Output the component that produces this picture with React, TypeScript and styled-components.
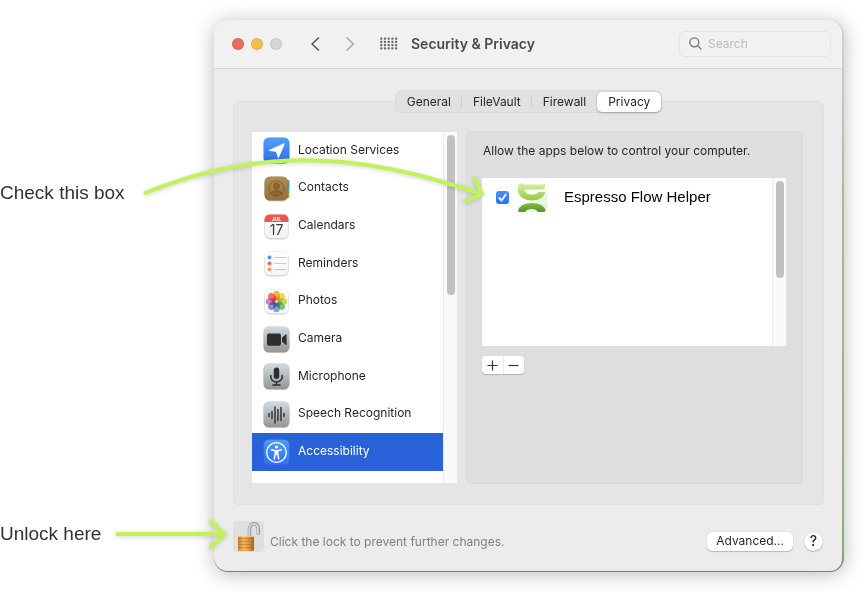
import React from "react";
import styled, { createGlobalStyle, css } from "styled-components";

const GlobalStyle = createGlobalStyle`
  *, *::before, *::after { box-sizing: border-box; }
  body {
    margin: 0;
    background: #fff;
    color: #262626;
    font-family: Inter, "Liberation Sans", sans-serif;
    font-size: 12px;
    line-height: 16px;
  }
  button, input { font: inherit; color: inherit; }
  button { border: 0; padding: 0; background: none; }
`;

const Page = styled.main`
  position: relative;
  display: grid;
  grid-template-columns: 214px minmax(0, 1fr);
  padding: 20px 20px 20px 0;
`;

const Notes = styled.aside`
  display: flex;
  flex-direction: column;
  justify-content: space-between;
  padding: 161px 0 26px;
  font-family: "Liberation Sans", sans-serif;
  font-size: 19px;
  line-height: 24px;
  color: #333;
`;

const Note = styled.p`
  margin: 0;
`;

const Arrows = styled.svg`
  position: absolute;
  left: 0;
  top: 0;
  pointer-events: none;
  filter: drop-shadow(0 1px 2px rgba(0, 0, 0, 0.18));
`;

const Backdrop = styled.div`
  padding: 0 2px 1px 0;
  border-radius: 14px;
  background: linear-gradient(#d5d6cc, #b2b79f 30%, #8fae7a 96%, #6f8461);
  box-shadow: 0 2px 20px rgba(0, 0, 0, 0.27);
`;

const Window = styled.section`
  border-radius: 14px 14px 12px 14px;
  background: #ececec;
  overflow: hidden;
`;

const TitleBar = styled.header`
  display: flex;
  align-items: center;
  height: 49px;
  padding: 0 11px 1px 18px;
  border-bottom: 1px solid #d5d5d5;
  background: #f1f1f1;
`;

const Lights = styled.div`
  display: flex;
  gap: 7px;
`;

const Light = styled.button<{ $color: string }>`
  width: 12px;
  height: 12px;
  border-radius: 50%;
  background: ${(p) => p.$color};
  box-shadow: inset 0 0 0 1px rgba(0, 0, 0, 0.08);
`;

const NavButtons = styled.div`
  display: flex;
  gap: 15px;
  margin: 0 19px 0 23px;
`;

const IconButton = styled.button`
  display: grid;
  place-items: center;
  width: 20px;
  height: 20px;
`;

const Title = styled.h1`
  flex: 1;
  margin: 0 0 0 12px;
  font-size: 14px;
  font-weight: 600;
  line-height: 20px;
  color: #4a4a4a;
`;

const SearchBox = styled.label`
  display: flex;
  align-items: center;
  gap: 6px;
  width: 152px;
  height: 26px;
  padding: 0 9px;
  border: 1px solid #e5e5e5;
  border-radius: 6px;
`;

const SearchInput = styled.input`
  min-width: 0;
  flex: 1;
  padding: 0;
  border: 0;
  outline: 0;
  background: none;
  &::placeholder { color: #bababa; opacity: 1; }
`;

const Body = styled.div`
  padding: 22px 18px 19px 19px;
`;

const Tabs = styled.div`
  position: relative;
  display: flex;
  align-items: center;
  width: fit-content;
  height: 21px;
  margin: 0 auto -11px;
  border-radius: 6px;
  background: #e1e1e1;
  box-shadow: 0 0 0 1px #dadada;
`;

const Tab = styled.button<{ $active?: boolean; $divided?: boolean }>`
  position: relative;
  height: 20px;
  padding: 0 11px;
  border-radius: 5px;
  ${(p) => p.$active && css`
    background: #fff;
    box-shadow: 0 0 1px rgba(0, 0, 0, 0.3), 0 1px 2px rgba(0, 0, 0, 0.25);
  `}
  ${(p) => p.$divided && css`
    &::after {
      content: "";
      position: absolute;
      right: 0;
      top: 4px;
      width: 1px;
      height: 12px;
      background: #cfcfcf;
    }
  `}
`;

const Panel = styled.div`
  display: flex;
  gap: 9px;
  padding: 29px 20px 20px 18px;
  border: 1px solid #dfdfdf;
  border-radius: 5px;
  background: #e5e5e5;
`;

const Scroller = styled.div<{ $width?: string; $height: string }>`
  display: flex;
  width: ${(p) => p.$width ?? "auto"};
  height: ${(p) => p.$height};
  background: #fff;
`;

const Track = styled.div`
  flex: none;
  width: 14px;
  padding: 3px;
  border-left: 1px solid #ebebeb;
  background: #fafafa;
`;

const Thumb = styled.div<{ $height: string }>`
  width: 8px;
  height: ${(p) => p.$height};
  border-radius: 4px;
  background: #c1c1c1;
`;

const Categories = styled.ul`
  display: grid;
  grid-auto-rows: 1fr;
  flex: 1;
  height: 339px;
  margin: 0;
  padding: 0;
  list-style: none;
`;

const CategoryButton = styled.button<{ $active: boolean }>`
  display: flex;
  align-items: center;
  gap: 8px;
  width: 100%;
  height: 100%;
  padding: 0 11px;
  text-align: left;
  background: ${(p) => (p.$active ? "#2961d9" : "transparent")};
  color: ${(p) => (p.$active ? "#fff" : "inherit")};
  svg { flex: none; }
`;

const CategoryLabel = styled.span`
  padding-bottom: 2px;
`;

const Sidebar = styled.nav`
  margin: 1px 0;
`;

const Detail = styled.section`
  flex: 1;
  min-width: 0;
  padding: 11px 16px 0 15px;
  border: 1px solid #d9d9d9;
  border-radius: 5px;
  background: #dedede;
`;

const Hint = styled.p`
  margin: 0 1px 19px;
`;

const Apps = styled.div`
  flex: 1;
`;

const AppRow = styled.label`
  display: flex;
  align-items: center;
  height: 38px;
  padding-left: 14px;
`;

const Check = styled.span`
  display: grid;
  margin-right: 8px;
  > * { grid-area: 1 / 1; }
  svg { pointer-events: none; }
`;

const CheckInput = styled.input`
  appearance: none;
  width: 13px;
  height: 13px;
  margin: 0;
  border-radius: 3px;
  background: #b5b5b5;
  &:checked { background: linear-gradient(#4a90fb, #2a72f5); }
`;

const AppName = styled.span`
  margin-left: 16px;
  font-family: "Liberation Sans", sans-serif;
  font-size: 15px;
  line-height: 20px;
  color: #000;
`;

const AddRemove = styled.div`
  display: flex;
  width: 42px;
  height: 18px;
  margin-top: 10px;
  border-radius: 4px;
  background: #fff;
  box-shadow: 0 1px 1px rgba(0, 0, 0, 0.2);
`;

const SmallButton = styled.button`
  display: grid;
  place-items: center;
  flex: 1;
  & + & { border-left: 1px solid #e8e8e8; }
`;

const Footer = styled.footer`
  display: flex;
  align-items: center;
  margin-top: 16px;
  padding-right: 1px;
`;

const LockButton = styled.button`
  width: 31px;
  height: 31px;
  border-radius: 4px;
  background: #dfdfdf;
`;

const LockText = styled.p`
  flex: 1;
  margin: 10px 0 0 6px;
  color: #7f7f7f;
`;

const PushButton = styled.button`
  height: 19px;
  margin: 9px 11px 0 0;
  padding: 0 9px;
  border-radius: 5px;
  background: #fff;
  box-shadow: 0 0 1px rgba(0, 0, 0, 0.25), 0 1px 1px rgba(0, 0, 0, 0.2);
`;

const HelpButton = styled(PushButton)`
  width: 19px;
  margin: 9px 0 0;
  padding: 0;
  border-radius: 50%;
  font-size: 14px;
  font-weight: 500;
`;

type Kind = "location" | "contacts" | "calendar" | "reminders" | "photos" | "camera" | "mic" | "speech" | "access";

const petals = ["#f79a1f", "#f3d32b", "#b5d334", "#5cb85a", "#4d95d9", "#7d6fc4", "#c06ab4", "#ee5547"];

const Petal = styled.rect`
  mix-blend-mode: multiply;
`;

function Art({ kind }: { kind: Kind }) {
  switch (kind) {
    case "location":
      return <path d="M21.500 6.500 15.300 21 13.400 14.500 6 13.400Z" fill="#fff" stroke="#fff" strokeWidth="0.8" strokeLinejoin="round" />;
    case "contacts":
      return (
        <g fill="none" stroke="#755729" strokeWidth="0.8">
          <circle cx="13.5" cy="13.5" r="7.6" />
          <circle cx="13.5" cy="11.3" r="3" fill="#87662f" />
          <path d="M7.8 18.3c1.2-3.4 10.2-3.4 11.4 0-3 3.7-8.4 3.7-11.4 0Z" fill="#87662f" />
        </g>
      );
    case "calendar":
      return (
        <g>
          <path d="M1.5 9V6.5a5 5 0 0 1 5-5h14a5 5 0 0 1 5 5V9Z" fill="#e9574e" />
          <text x="13.5" y="7.6" textAnchor="middle" fontSize="5" fontWeight="700" fill="#fff">JUL</text>
          <text x="13.5" y="22" textAnchor="middle" fontSize="14" fill="#3a3a3a">17</text>
        </g>
      );
    case "reminders":
      return (
        <g>
          {["#3d83f5", "#ea4e3d", "#f19a37"].map((c, i) => (
            <g key={c}>
              <circle cx="6.5" cy={7.5 + i * 6} r="2.3" fill={c} opacity="0.45" />
              <circle cx="6.5" cy={7.5 + i * 6} r="1.4" fill={c} />
              <path d={`M11 ${7.5 + i * 6}h12.5`} stroke="#c4c4c4" strokeWidth="0.9" />
            </g>
          ))}
        </g>
      );
    case "photos":
      return (
        <g>
          {petals.map((c, i) => (
            <Petal key={c} x="10.3" y="2.800" width="6.400" height="9.600" rx="3.2" fill={c} opacity="0.8" transform={`rotate(${i * 45} 13.5 13.5)`} />
          ))}
        </g>
      );
    case "camera":
      return <path d="M6 7.5h10a2 2 0 0 1 2 2v8.3a2 2 0 0 1-2 2H6a2 2 0 0 1-2-2V9.5a2 2 0 0 1 2-2ZM19 11.700l3.6-3.2q1-.6 1 .5v9.3q0 1.100-1 .5L19 15.600Z" fill="#2d2d2d" />;
    case "mic":
      return (
        <g fill="none" stroke="#2d2d2d" strokeWidth="1.5" strokeLinecap="round">
          <rect x="10.800" y="4.500" width="5.400" height="11.500" rx="2.7" fill="#2d2d2d" stroke="none" />
          <path d="M7.8 12.5v1.5a5.7 5 0 0 0 11.400 0v-1.500M13.500 19v3M10 22h7" />
        </g>
      );
    case "speech":
      return <path d="M6 12.5v3M9 10.5v7M12 6v16M15 8.5v11M18 6.5v13M21 12.5v3" stroke="#2d2d2d" strokeWidth="1.4" strokeLinecap="round" />;
    default:
      return (
        <g fill="none" stroke="#fff" strokeLinecap="round" strokeLinejoin="round">
          <circle cx="13.5" cy="13.5" r="9.8" strokeWidth="1.3" />
          <circle cx="13.5" cy="8" r="1.6" fill="#fff" stroke="none" />
          <path d="M8.5 10.800 12.300 11.700V14.500L11.300 20M18.500 10.800 14.700 11.700V14.500L15.700 20M12.300 11.700h2.400M12.700 14h1.600M13.500 11.700v3.500" strokeWidth="1.5" />
        </g>
      );
  }
}

const fills: Record<Kind, [string, string]> = {
  location: ["#52a0fa", "#2c6cf3"],
  contacts: ["#b08d56", "#94713a"],
  calendar: ["#ffffff", "#f1f1f1"],
  reminders: ["#ffffff", "#f5f4f2"],
  photos: ["#ffffff", "#fbfbfb"],
  camera: ["#d0dce1", "#949494"],
  mic: ["#d0dce1", "#949494"],
  speech: ["#d0dce1", "#949494"],
  access: ["#4c9bfa", "#2d70f4"],
};

const inset: Kind[] = ["contacts", "calendar", "reminders", "photos"];

function CategoryIcon({ kind }: { kind: Kind }) {
  const o = inset.includes(kind) ? 1.5 : 0.5;
  const id = `fill-${kind}`;
  return (
    <svg width="27" height="27" viewBox="0 0 27 27" aria-hidden="true">
      <defs>
        <linearGradient id={id} x2="0" y2="1">
          <stop stopColor={fills[kind][0]} />
          <stop offset="1" stopColor={fills[kind][1]} />
        </linearGradient>
      </defs>
      {kind === "contacts" && (
        <g>
          <rect x="21" y="5" width="5.5" height="6" rx="1" fill="#8c8c8c" />
          <rect x="21" y="10" width="5.5" height="5" rx="1" fill="#55a4dc" />
          <rect x="21" y="15" width="5.5" height="4" rx="1" fill="#62bf6a" />
          <rect x="21" y="19" width="5.5" height="4" rx="1" fill="#e69a3c" />
        </g>
      )}
      {o > 1 && <rect x={o} y={o + 0.9} width={27 - 2 * o} height={27 - 2 * o} rx="5.5" fill="#000" opacity="0.18" />}
      <rect x={o} y={o} width={kind === "contacts" ? 23.5 : 27 - 2 * o} height={27 - 2 * o} rx="5.5" fill={`url(#${id})`} stroke="#000" strokeOpacity="0.08" strokeWidth="0.7" />
      <Art kind={kind} />
    </svg>
  );
}

function HelperIcon() {
  return (
    <svg width="31" height="31" viewBox="0 0 31 31" aria-hidden="true">
      <defs>
        <linearGradient id="helper-bg" x2="1" y2="1">
          <stop offset="0.4" stopColor="#fff" />
          <stop offset="1" stopColor="#dff0cc" />
        </linearGradient>
        <linearGradient id="helper-top" x2="0" y2="1">
          <stop stopColor="#dcf0ae" />
          <stop offset="1" stopColor="#93c93f" />
        </linearGradient>
        <linearGradient id="helper-low" x2="0" y2="1">
          <stop stopColor="#86bf43" />
          <stop offset="1" stopColor="#4f9430" />
        </linearGradient>
      </defs>
      <rect x="1" y="1" width="29" height="29" rx="5" fill="url(#helper-bg)" />
      <path d="M1 3Q3 2 5 1Q6 2.500 8 2.500H24Q27 2.500 28 1V5.500Q27.500 7.500 25 7.500H9.500Q8 7.500 7.500 8.500Q9 12.500 15 12.500Q20 12.500 21.500 10H28.500Q26 18.500 15 18.500Q4 18.500 1 10Z" fill="url(#helper-top)" />
      <path d="M1 29Q3 21 15 21Q27 21 28.500 29Q28 30 26 30H21Q19 27 15 27Q10 27 8 30H3Q1 30 1 29Z" fill="url(#helper-low)" />
    </svg>
  );
}

function LockIcon() {
  return (
    <svg width="31" height="31" viewBox="0 0 31 31" aria-hidden="true">
      <defs>
        <linearGradient id="brass">
          <stop stopColor="#c97f2c" />
          <stop offset="0.35" stopColor="#f2b866" />
          <stop offset="0.75" stopColor="#d68d37" />
          <stop offset="1" stopColor="#a9641c" />
        </linearGradient>
      </defs>
      <path d="M16.500 15.500V8.500C16.500 1 25.300 1 25.300 8V13.500" fill="none" stroke="#8b979c" strokeWidth="3.4" />
      <path d="M16.300 15.500V8.500C16.300 1.200 25 1.200 25 8V13" fill="none" stroke="#d3dde1" strokeWidth="1.8" />
      <rect x="5" y="15" width="16" height="15" rx="1.5" fill="url(#brass)" />
      <path d="M5 17.500h16M5 20.500h16M5 23.500h16M5 26.500h16" stroke="#9a5a18" strokeWidth="0.7" opacity="0.6" />
      <path d="M5.500 15.500h15" stroke="#f7d08d" strokeWidth="0.8" />
    </svg>
  );
}

const categories: { kind: Kind; label: string }[] = [
  { kind: "location", label: "Location Services" },
  { kind: "contacts", label: "Contacts" },
  { kind: "calendar", label: "Calendars" },
  { kind: "reminders", label: "Reminders" },
  { kind: "photos", label: "Photos" },
  { kind: "camera", label: "Camera" },
  { kind: "mic", label: "Microphone" },
  { kind: "speech", label: "Speech Recognition" },
  { kind: "access", label: "Accessibility" },
];

export default function App() {
  return (
    <>
      <GlobalStyle />
      <Page>
        <Notes>
          <Note>Check this box</Note>
          <Note>Unlock here</Note>
        </Notes>
        <Backdrop>
          <Window>
            <TitleBar>
              <Lights>
                <Light $color="#ed6a5e" aria-label="Close" />
                <Light $color="#f4bd4f" aria-label="Minimize" />
                <Light $color="#d6d6d6" aria-label="Zoom" disabled />
              </Lights>
              <NavButtons>
                <IconButton aria-label="Back">
                  <svg width="10" height="14" viewBox="0 0 10 14" fill="none" stroke="#555" strokeWidth="1.6" strokeLinecap="round" strokeLinejoin="round"><path d="M8.500 1 2 7 8.500 13" /></svg>
                </IconButton>
                <IconButton aria-label="Forward">
                  <svg width="10" height="14" viewBox="0 0 10 14" fill="none" stroke="#aaa" strokeWidth="1.6" strokeLinecap="round" strokeLinejoin="round"><path d="M2 1 8.500 7 2 13" /></svg>
                </IconButton>
              </NavButtons>
              <IconButton aria-label="Show all">
                <svg width="18" height="14" viewBox="0 0 18 14" fill="#666">
                  {[0, 1, 2, 3].map((r) => [0, 1, 2, 3, 4].map((c) => (
                    <rect key={`${r}-${c}`} x={0.2 + c * 3.7} y={0.6 + r * 3.2} width="2.2" height="2.2" rx="0.7" />
                  )))}
                </svg>
              </IconButton>
              <Title>Security &amp; Privacy</Title>
              <SearchBox>
                <svg width="13" height="13" viewBox="0 0 13 13" fill="none" stroke="#777" strokeWidth="1.3" strokeLinecap="round"><circle cx="5.3" cy="5.3" r="4.5" /><path d="m8.800 8.800 3.300 3.300" /></svg>
                <SearchInput type="search" placeholder="Search" aria-label="Search" />
              </SearchBox>
            </TitleBar>
            <Body>
              <Tabs role="tablist">
                <Tab role="tab" $divided>General</Tab>
                <Tab role="tab" $divided>FileVault</Tab>
                <Tab role="tab">Firewall</Tab>
                <Tab role="tab" aria-selected $active>Privacy</Tab>
              </Tabs>
              <Panel>
                <Sidebar aria-label="Privacy categories">
                  <Scroller $width="205px" $height="351px">
                    <Categories>
                      {categories.map((c) => (
                        <li key={c.kind}>
                          <CategoryButton $active={c.kind === "access"}>
                            <CategoryIcon kind={c.kind} />
                            <CategoryLabel>{c.label}</CategoryLabel>
                          </CategoryButton>
                        </li>
                      ))}
                    </Categories>
                    <Track><Thumb $height="160px" /></Track>
                  </Scroller>
                </Sidebar>
                <Detail>
                  <Hint>Allow the apps below to control your computer.</Hint>
                  <Scroller $height="168px">
                    <Apps>
                      <AppRow>
                        <Check>
                          <CheckInput type="checkbox" defaultChecked />
                          <svg width="13" height="13" viewBox="0 0 13 13" fill="none" stroke="#fff" strokeWidth="1.8" strokeLinecap="round" strokeLinejoin="round"><path d="M3.300 6.900 5.600 9.600 9.700 3.400" /></svg>
                        </Check>
                        <HelperIcon />
                        <AppName>Espresso Flow Helper</AppName>
                      </AppRow>
                    </Apps>
                    <Track><Thumb $height="97px" /></Track>
                  </Scroller>
                  <AddRemove>
                    <SmallButton aria-label="Add"><svg width="11" height="11" viewBox="0 0 11 11" stroke="#333" strokeWidth="1.2"><path d="M.5 5.500h10M5.500.5v10" /></svg></SmallButton>
                    <SmallButton aria-label="Remove"><svg width="11" height="11" viewBox="0 0 11 11" stroke="#333" strokeWidth="1.2"><path d="M.5 5.500h10" /></svg></SmallButton>
                  </AddRemove>
                </Detail>
              </Panel>
              <Footer>
                <LockButton aria-label="Lock"><LockIcon /></LockButton>
                <LockText>Click the lock to prevent further changes.</LockText>
                <PushButton>Advanced...</PushButton>
                <HelpButton aria-label="Help">?</HelpButton>
              </Footer>
            </Body>
          </Window>
        </Backdrop>
        <Arrows width="500" height="560" viewBox="0 0 500 560" fill="none" stroke="#c1f25a" strokeWidth="4" aria-hidden="true">
          <path d="M144 193.500C250 150 350 148 481 194" />
          <path d="M474.500 178.500 482 194 465.500 201" strokeLinecap="round" />
          <path d="M116 534H224" />
          <path d="M211 521 224.500 534 211 547" strokeLinecap="round" />
        </Arrows>
      </Page>
    </>
  );
}
